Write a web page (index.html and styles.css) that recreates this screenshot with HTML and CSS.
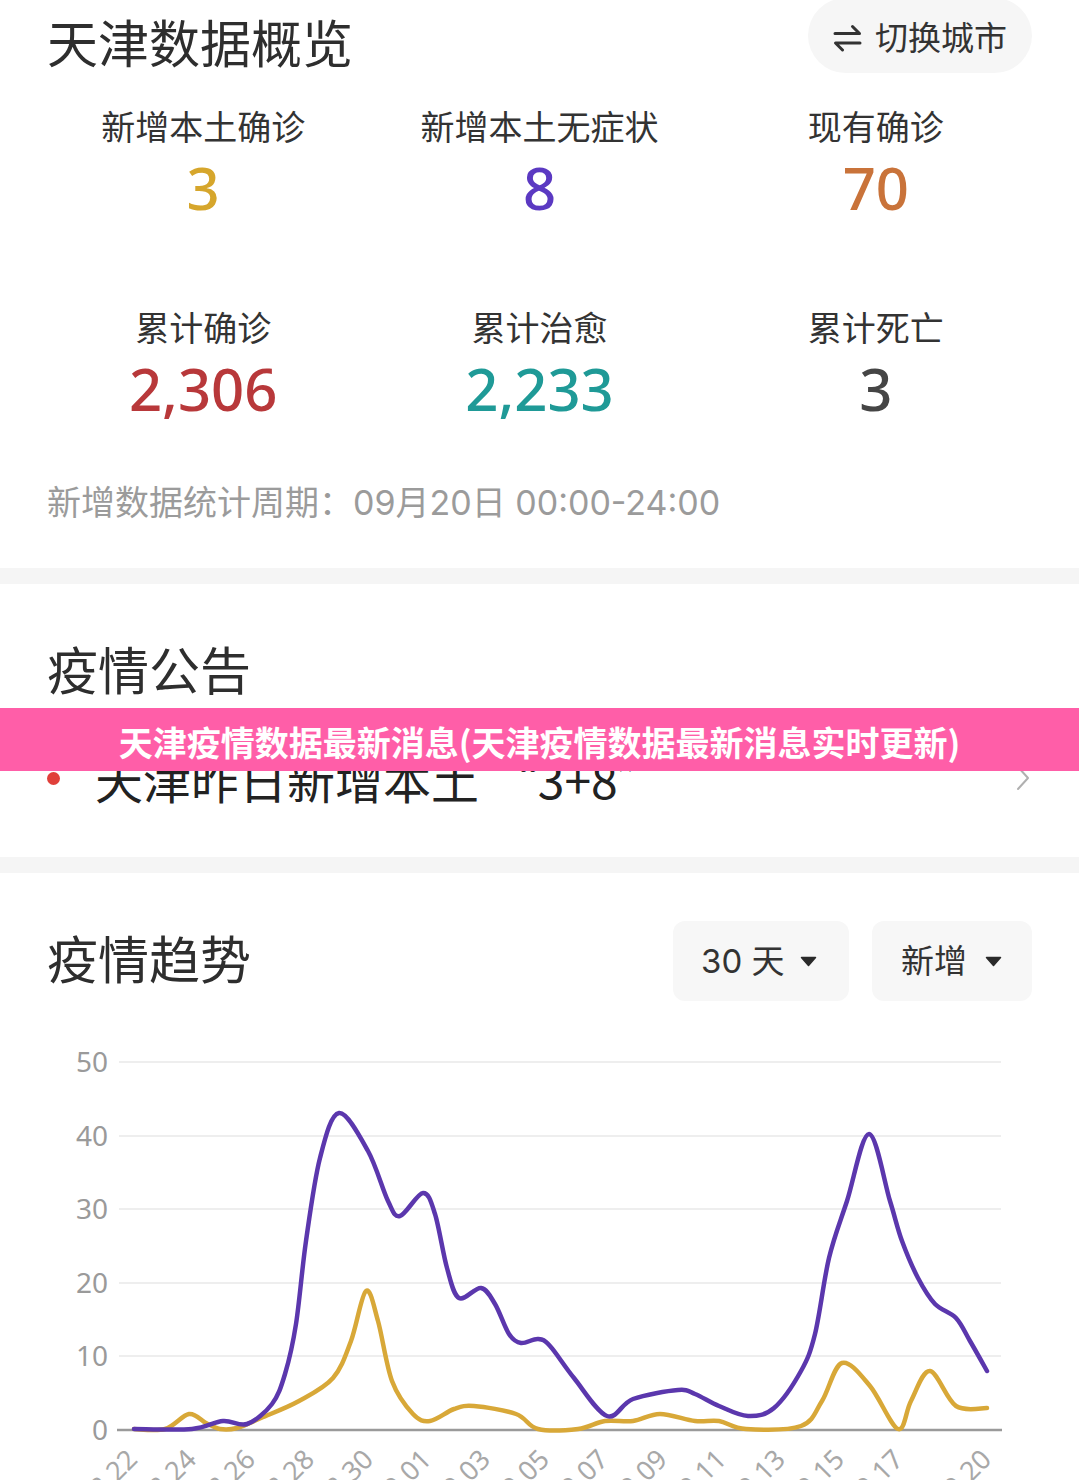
FILE: index.html
```html
<!DOCTYPE html>
<html lang="zh-CN">
<head>
<meta charset="utf-8">
<title>天津数据概览</title>
<link rel="stylesheet" href="styles.css">
</head>
<body>
<div class="page">
  <section class="overview">
    <div class="ov-head">
      <h1 class="title">天津数据概览</h1>
      <button class="switch">
        <svg class="switch-icon" width="29" height="28" viewBox="0 0 29 28">
          <path d="M2 9.5 H26.5 L19.5 2.5" />
          <path d="M27 19 H2.5 L9.5 26" />
        </svg>
        <span>切换城市</span>
      </button>
    </div>
    <div class="stats">
      <div class="stat"><div class="label">新增本土确诊</div><div class="num c-gold">3</div></div>
      <div class="stat"><div class="label">新增本土无症状</div><div class="num c-purple">8</div></div>
      <div class="stat"><div class="label">现有确诊</div><div class="num c-orange">70</div></div>
      <div class="stat"><div class="label">累计确诊</div><div class="num c-red">2,306</div></div>
      <div class="stat"><div class="label">累计治愈</div><div class="num c-teal">2,233</div></div>
      <div class="stat"><div class="label">累计死亡</div><div class="num c-gray">3</div></div>
    </div>
    <p class="note">新增数据统计周期：09月20日 00:00-24:00</p>
  </section>

  <div class="sep"></div>

  <section class="notice">
    <h2 class="title">疫情公告</h2>
    <div class="notice-row">
      <span class="dot"></span>
      <span class="notice-text">天津昨日新增本土 “3+8”</span>
      <svg class="chevron" width="14" height="26" viewBox="0 0 14 26">
        <polyline points="2,2 12,13 2,24" />
      </svg>
    </div>
  </section>

  <div class="sep"></div>

  <section class="trend">
    <div class="trend-head">
      <h2 class="title">疫情趋势</h2>
      <div class="filters">
        <div class="dd dd-days"><span>30 天</span>
          <svg class="tri" width="17" height="11" viewBox="0 0 17 11"><path d="M1.5 1.5 H15.5 L8.5 9.5 Z" /></svg>
        </div>
        <div class="dd dd-type"><span>新增</span>
          <svg class="tri" width="17" height="11" viewBox="0 0 17 11"><path d="M1.5 1.5 H15.5 L8.5 9.5 Z" /></svg>
        </div>
      </div>
    </div>
    <svg class="chart" width="1079" height="480" viewBox="0 1000 1079 480">
      <g class="grid">
        <line x1="119" y1="1061" x2="1001" y2="1061" />
        <line x1="119" y1="1135" x2="1001" y2="1135" />
        <line x1="119" y1="1208" x2="1001" y2="1208" />
        <line x1="119" y1="1282" x2="1001" y2="1282" />
        <line x1="119" y1="1355" x2="1001" y2="1355" />
      </g>
      <line class="axis" x1="117" y1="1429" x2="1002" y2="1429" />
      <g class="ylab">
        <text x="108" y="1071">50</text>
        <text x="108" y="1145">40</text>
        <text x="108" y="1218">30</text>
        <text x="108" y="1292">20</text>
        <text x="108" y="1365">10</text>
        <text x="108" y="1439">0</text>
      </g>
      <g class="xlab">
        <text transform="translate(139,1460) rotate(-45)">8.22</text>
        <text transform="translate(198,1460) rotate(-45)">8.24</text>
        <text transform="translate(257,1460) rotate(-45)">8.26</text>
        <text transform="translate(316,1460) rotate(-45)">8.28</text>
        <text transform="translate(375,1460) rotate(-45)">8.30</text>
        <text transform="translate(433,1460) rotate(-45)">9.01</text>
        <text transform="translate(492,1460) rotate(-45)">9.03</text>
        <text transform="translate(551,1460) rotate(-45)">9.05</text>
        <text transform="translate(610,1460) rotate(-45)">9.07</text>
        <text transform="translate(669,1460) rotate(-45)">9.09</text>
        <text transform="translate(728,1460) rotate(-45)">9.11</text>
        <text transform="translate(787,1460) rotate(-45)">9.13</text>
        <text transform="translate(846,1460) rotate(-45)">9.15</text>
        <text transform="translate(905,1460) rotate(-45)">9.17</text>
        <text transform="translate(993,1460) rotate(-45)">9.20</text>
      </g>
      <polyline class="smooth line-gold" points="134,1428 165,1428 189,1413 206,1422 220,1428 237,1427 261,1417 299,1400 333,1377 351,1340 366,1290 378,1320 392,1380 413,1413 430,1420 454,1408 474,1405 516,1413 538,1428 578,1428 605,1420 633,1420 660,1413 695,1420 719,1420 746,1428 801,1425 822,1400 842,1362 870,1385 898,1428 911,1400 930,1370 956,1405 987,1407" />
      <polyline class="smooth line-purple" points="134,1428 192,1428 223,1420 247,1423 272,1403 285,1373 296,1323 306,1240 320,1157 339,1112 368,1150 388,1200 400,1215 423,1192 435,1213 447,1267 459,1297 481,1287 495,1303 509,1333 521,1342 538,1338 550,1345 574,1377 607,1415 633,1398 678,1389 695,1393 719,1405 748,1415 774,1407 801,1370 815,1333 829,1257 847,1200 869,1133 890,1200 902,1240 918,1277 935,1303 956,1317 970,1340 987,1370" />
    </svg>
  </section>

  <div class="banner">天津疫情数据最新消息(天津疫情数据最新消息实时更新)</div>
</div>
<script src="script.js"></script>
</body>
</html>
```

FILE: styles.css
```css
* {
  box-sizing: border-box;
  margin: 0;
  padding: 0;
}

html, body {
  background: #ffffff;
}

body {
  width: 1079px;
  height: 1480px;
  overflow: hidden;
  font-family: Inter, "Noto Sans CJK SC", sans-serif;
  color: #333333;
}

.page {
  position: relative;
  width: 1079px;
}

.title {
  font-size: 51px;
  line-height: 50px;
  font-weight: 400;
  color: #2e2e2e;
}

/* ---------- overview ---------- */
.overview {
  padding-bottom: 45px;
}

.ov-head {
  display: flex;
  justify-content: space-between;
  align-items: flex-start;
  height: 73px;
  padding: 0 47px;
}

.ov-head .title {
  margin-top: 20px;
}

.switch {
  margin-top: -2px;
  width: 224px;
  height: 75px;
  border: none;
  border-radius: 38px;
  background: #f6f6f6;
  display: flex;
  align-items: center;
  justify-content: center;
  gap: 13px;
  padding-top: 4px;
  font-family: Inter, "Noto Sans CJK SC", sans-serif;
  font-size: 33px;
  line-height: 40px;
  color: #333333;
}

.switch-icon path {
  fill: none;
  stroke: #333333;
  stroke-width: 3;
  stroke-linecap: round;
  stroke-linejoin: round;
}

.stats {
  display: grid;
  grid-template-columns: repeat(3, 1fr);
  row-gap: 90px;
  padding: 0 35px;
  margin-top: 35px;
}

.stat {
  display: flex;
  flex-direction: column;
  align-items: center;
  gap: 9px;
}

.label {
  font-size: 34px;
  line-height: 40px;
  color: #333333;
}

.num {
  font-family: "Noto Sans", sans-serif;
  font-size: 58px;
  line-height: 62px;
  font-weight: 500;
}

.c-gold { color: #d6a62c; }
.c-purple { color: #5b39c2; }
.c-orange { color: #c9733a; }
.c-red { color: #b8383a; }
.c-teal { color: #1f9a97; }
.c-gray { color: #454545; }

.note {
  margin-top: 63px;
  padding: 0 47px;
  font-size: 34px;
  line-height: 40px;
  color: #9b9b9b;
}

.sep {
  height: 16px;
  background: #f5f5f5;
}

/* ---------- notice ---------- */
.notice {
  padding: 63px 47px 51px;
}

.notice-row {
  display: flex;
  align-items: center;
  height: 56px;
  margin-top: 53px;
}

.dot {
  width: 13px;
  height: 13px;
  border-radius: 50%;
  background: #e0403a;
  flex: none;
}

.notice-text {
  flex: 1;
  margin-left: 35px;
  font-family: "Noto Sans CJK SC", sans-serif;
  font-size: 48px;
  line-height: 56px;
  color: #222222;
}

.chevron {
  flex: none;
  margin-right: 2px;
}

.chevron polyline {
  fill: none;
  stroke: #b0b0b0;
  stroke-width: 2;
  stroke-linecap: round;
  stroke-linejoin: round;
}

/* ---------- trend ---------- */
.trend {
  padding-top: 48px;
}

.trend-head {
  display: flex;
  justify-content: space-between;
  align-items: center;
  height: 80px;
  padding: 0 47px;
}

.filters {
  display: flex;
  gap: 23px;
}

.dd {
  height: 80px;
  border-radius: 12px;
  background: #f7f7f7;
  display: flex;
  align-items: center;
  font-size: 33px;
  line-height: 40px;
  color: #333333;
}

.dd-days {
  width: 176px;
  padding-left: 28px;
  gap: 16px;
}

.dd-type {
  width: 160px;
  padding-left: 29px;
  gap: 18px;
}

.tri path {
  fill: #2a2a2a;
  stroke: #2a2a2a;
  stroke-width: 1.5;
  stroke-linejoin: round;
}

.chart {
  display: block;
  width: 1079px;
  height: 480px;
}

.grid line {
  stroke: #eeeeee;
  stroke-width: 2;
}

.axis {
  stroke: #9a9a9a;
  stroke-width: 2.5;
}

.ylab text {
  font-family: "Noto Sans", sans-serif;
  font-size: 28px;
  fill: #9a9a9a;
  text-anchor: end;
}

.xlab text {
  font-family: "Noto Sans", sans-serif;
  font-size: 27px;
  fill: #a8a8a8;
  text-anchor: end;
}

.line-gold,
.line-purple {
  fill: none;
  stroke-width: 4.5;
  stroke-linecap: round;
  stroke-linejoin: round;
}

.line-gold {
  stroke: #d8a838;
}

.line-purple {
  stroke: #5b37ad;
}

/* ---------- overlay banner ---------- */
.banner {
  position: absolute;
  top: 708px;
  left: 0;
  right: 0;
  height: 63px;
  padding-top: 4px;
  background: #ff5ea8;
  color: #ffffff;
  font-family: "Noto Sans CJK SC", sans-serif;
  font-size: 34px;
  line-height: 59px;
  font-weight: 700;
  text-align: center;
}
```

FILE: script.js
```js
(function () {
  var NS = 'http://www.w3.org/2000/svg';
  var lines = document.querySelectorAll('polyline.smooth');
  Array.prototype.forEach.call(lines, function (pl) {
    var pts = pl.getAttribute('points').trim().split(/\s+/).map(function (p) {
      return p.split(',').map(Number);
    });
    var d = 'M' + pts[0][0] + ',' + pts[0][1];
    for (var i = 0; i < pts.length - 1; i++) {
      var p0 = pts[i - 1] || pts[i];
      var p1 = pts[i];
      var p2 = pts[i + 1];
      var p3 = pts[i + 2] || p2;
      var c1x = p1[0] + (p2[0] - p0[0]) / 6;
      var c1y = p1[1] + (p2[1] - p0[1]) / 6;
      var c2x = p2[0] - (p3[0] - p1[0]) / 6;
      var c2y = p2[1] - (p3[1] - p1[1]) / 6;
      d += ' C' + c1x.toFixed(1) + ',' + c1y.toFixed(1) + ' ' +
        c2x.toFixed(1) + ',' + c2y.toFixed(1) + ' ' + p2[0] + ',' + p2[1];
    }
    var path = document.createElementNS(NS, 'path');
    path.setAttribute('d', d);
    path.setAttribute('class', pl.getAttribute('class'));
    pl.parentNode.replaceChild(path, pl);
  });
})();
```
